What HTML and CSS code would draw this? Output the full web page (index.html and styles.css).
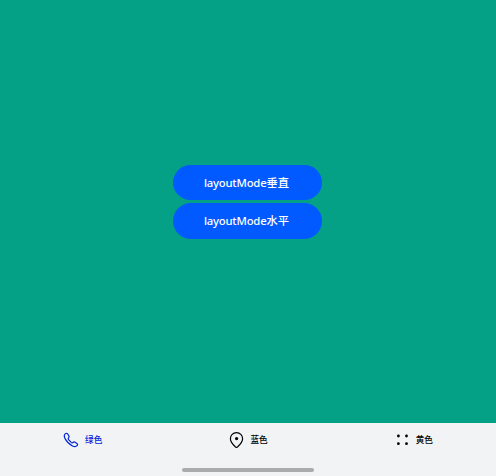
FILE: index.html
```html
<!DOCTYPE html>
<html lang="zh">
<head>
<meta charset="utf-8">
<title>Tabs</title>
<link rel="stylesheet" href="styles.css">
</head>
<body>
<main class="content">
  <button class="mode"><span class="latin">layoutMode</span>垂直</button>
  <button class="mode"><span class="latin">layoutMode</span>水平</button>
</main>
<footer class="bar">
  <nav class="tabs">
    <a class="tab active">
      <svg class="icon" viewBox="0 0 16 16"><path d="M2.2 1.8C3 1 4.1 1.1 4.7 2L5.8 3.8C6.3 4.7 6.1 5.3 5.5 5.9C4.9 6.5 5.2 7.1 5.8 7.9L8 10.1C8.8 10.8 9.4 11.1 10 10.5C10.7 9.8 11.3 9.8 12.1 10.3L13.9 11.4C14.8 12 14.8 13 14.1 13.7C12.8 15 11.2 14.8 9.5 14C6 12.3 3.6 9.8 2 6.6C1.1 4.8 .9 3.1 2.2 1.8Z"/></svg>
      <span class="label">绿色</span>
    </a>
    <a class="tab">
      <svg class="icon" viewBox="0 0 16 16"><path d="M8.5.6C5 .6 2.4 3.2 2.4 6.8C2.4 10.3 5.2 12.9 7.5 15Q8.5 15.8 9.5 15C11.8 12.9 14.6 10.3 14.6 6.8C14.6 3.2 12 .6 8.5.6Z"/><circle class="dot" cx="8.6" cy="6.6" r="1.6"/></svg>
      <span class="label">蓝色</span>
    </a>
    <a class="tab">
      <svg class="icon" viewBox="0 0 16 16"><g class="dot"><circle cx="4.4" cy="4" r="1.4"/><circle cx="12.5" cy="4" r="1.4"/><circle cx="4.4" cy="11.7" r="1.4"/><circle cx="12.5" cy="11.7" r="1.4"/></g></svg>
      <span class="label">黄色</span>
    </a>
  </nav>
  <div class="handle"></div>
</footer>
</body>
</html>
```
FILE: styles.css
```css
* { box-sizing: border-box; }
body {
  margin: 0;
  height: 476px;
  display: flex;
  flex-direction: column;
  font-family: "Noto Sans", "Noto Sans CJK SC", sans-serif;
}
.content {
  height: 423px;
  padding: 165px 1px 0 0;
  display: flex;
  flex-direction: column;
  align-items: center;
  gap: 3px;
  background: #04a187;
}
.mode {
  width: 149px;
  height: 35.3px;
  padding: 0 2px 0 0;
  border: 0;
  border-radius: 18px;
  background: #005aff;
  color: #fff;
  font: 500 11.3px/35px "Noto Sans CJK SC", sans-serif;
  white-space: nowrap;
}
.latin {
  font-family: "Noto Sans", sans-serif;
  font-size: 11.3px;
  letter-spacing: -0.2px;
}
.bar {
  height: 53px;
  display: flex;
  flex-direction: column;
  align-items: center;
  justify-content: space-between;
  padding-bottom: 4px;
  background: #f1f3f5;
}
.tabs {
  width: 100%;
  height: 34px;
  display: grid;
  grid-template-columns: repeat(3, 1fr);
}
.tab {
  display: flex;
  align-items: center;
  justify-content: center;
  gap: 6px;
  color: #000;
}
.active { color: #0022dc; }
.icon {
  width: 16px;
  height: 16px;
  fill: none;
  stroke: currentColor;
  stroke-width: 1.2;
}
.dot { fill: currentColor; stroke: none; }
.label {
  padding-bottom: 2px;
  font: 500 8.6px/12px "Noto Sans CJK SC", sans-serif;
}
.handle {
  width: 132px;
  height: 4px;
  border-radius: 2px;
  background: #aaabad;
}
```
